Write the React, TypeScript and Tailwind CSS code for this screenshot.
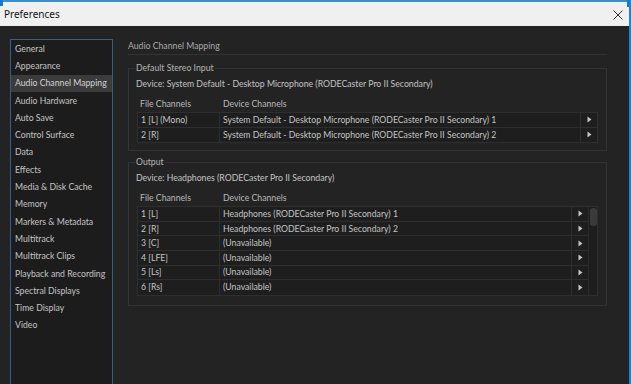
import React from 'react';

const sections = [
  'General',
  'Appearance',
  'Audio Channel Mapping',
  'Audio Hardware',
  'Auto Save',
  'Control Surface',
  'Data',
  'Effects',
  'Media & Disk Cache',
  'Memory',
  'Markers & Metadata',
  'Multitrack',
  'Multitrack Clips',
  'Playback and Recording',
  'Spectral Displays',
  'Time Display',
  'Video',
];

const inputRows = [
  ['1 [L] (Mono)', 'System Default - Desktop Microphone (RODECaster Pro II Secondary) 1'],
  ['2 [R]', 'System Default - Desktop Microphone (RODECaster Pro II Secondary) 2'],
];

const outputRows = [
  ['1 [L]', 'Headphones (RODECaster Pro II Secondary) 1'],
  ['2 [R]', 'Headphones (RODECaster Pro II Secondary) 2'],
  ['3 [C]', '(Unavailable)'],
  ['4 [LFE]', '(Unavailable)'],
  ['5 [Ls]', '(Unavailable)'],
  ['6 [Rs]', '(Unavailable)'],
];

function Arrow() {
  return (
    <svg width="5" height="7" viewBox="0 0 5 7" className="block">
      <path d="M0.5 0.5 L4.5 3.5 L0.5 6.5 Z" fill="#c4c4c4" />
    </svg>
  );
}

function ChannelTable({ rows, scroll }: { rows: string[][]; scroll?: boolean }) {
  return (
    <div>
      <div className="flex h-[16px] items-center text-[#b9b9b9]">
        <div className="w-[83px] pl-[3px]">File Channels</div>
        <div className="pl-[3px]">Device Channels</div>
      </div>
      <div className="flex border border-[#2e2e2e] bg-[#1e1e1e]">
        <div className="flex-1">
          {rows.map(([file, device], i) => (
            <div
              key={file}
              className={`flex h-[14.6px] items-center ${i < rows.length - 1 ? 'border-b border-[#2e2e2e]' : ''}`}
            >
              <div className="w-[82px] h-full flex items-center pl-[3px] border-r border-[#2e2e2e]">{file}</div>
              <div className="flex-1 h-full flex items-center pl-[3px] border-r border-[#2e2e2e]">{device}</div>
              <div className="w-[16px] h-full flex items-center justify-center">
                <Arrow />
              </div>
            </div>
          ))}
        </div>
        {scroll && (
          <div className="w-[9px] border-l border-[#2a2a2a] pt-[1px] pl-[1px]">
            <div className="h-[18px] w-[7px] rounded-[3px] bg-[#3a3a3a]" />
          </div>
        )}
      </div>
    </div>
  );
}

export default function App() {
  return (
    <div
      className="relative w-[631px] h-[384px] overflow-hidden bg-[#232323] flex flex-col text-[8.7px] leading-[12px] text-[#c4c4c4]"
      style={{ fontFamily: 'Lato, "Open Sans", sans-serif' }}
    >
      {/* window frame */}
      <div className="h-[3px] bg-[#f0f0f0] border-t-2 border-[#3f8fc6]" />
      <div className="absolute left-0 top-0 w-[3px] h-[6px] bg-[#1479d6]" />
      <div className="absolute right-0 top-0 w-[4px] h-[7px] bg-[#1479d6]" />
      <div className="absolute right-0 top-0 bottom-0 w-[2px] bg-[#2d7fc0]" />

      <div className="h-[23px] bg-[#f0f0f0] flex items-center justify-between pl-[4px] pr-[7px] text-[10px] text-[#111]" style={{ fontFamily: '"Noto Sans", sans-serif' }}>
        <span className="-mt-[2px]">Preferences</span>
        <svg width="10" height="10" viewBox="0 0 10 10" className="mr-[1px]">
          <path d="M0.5 0.5 L9.5 9.5 M9.5 0.5 L0.5 9.5" stroke="#333" strokeWidth="1" />
        </svg>
      </div>

      <div className="flex-1 flex pr-[2px]">
        <div className="ml-[10px] mt-[13px] w-[103px] border border-[#3b5d86] bg-[#1c1c1c] -mb-[4px]">
          {sections.map((s) => (
            <div
              key={s}
              className={`h-[17.3px] flex items-center pl-[4px] whitespace-nowrap ${
                s === 'Audio Channel Mapping' ? 'bg-[#3b3b3b] text-[#d4d4d4]' : ''
              }`}
            >
              {s}
            </div>
          ))}
        </div>

        <div className="flex-1 pl-[15px] pr-[22px] pt-[14px]">
          <div className="text-[#aaaaaa]">Audio Channel Mapping</div>
          <div className="mt-[2px] h-px bg-[#333333]" />

          <fieldset className="mt-[7px] border border-[#333333] px-[8px] pb-[7px]">
            <legend className="-ml-[2px] px-[1px] text-[#b5b5b5]">Default Stereo Input</legend>
            <div className="mt-[4px] -ml-[1px]">Device: System Default - Desktop Microphone (RODECaster Pro II Secondary)</div>
            <div className="mt-[6px]">
              <ChannelTable rows={inputRows} />
            </div>
          </fieldset>

          <fieldset className="mt-[5px] border border-[#333333] px-[8px] pb-[9px]">
            <legend className="-ml-[2px] px-[1px] text-[#b5b5b5]">Output</legend>
            <div className="mt-[4px] -ml-[1px]">Device: Headphones (RODECaster Pro II Secondary)</div>
            <div className="mt-[6px]">
              <ChannelTable rows={outputRows} scroll />
            </div>
          </fieldset>
        </div>
      </div>
    </div>
  );
}
